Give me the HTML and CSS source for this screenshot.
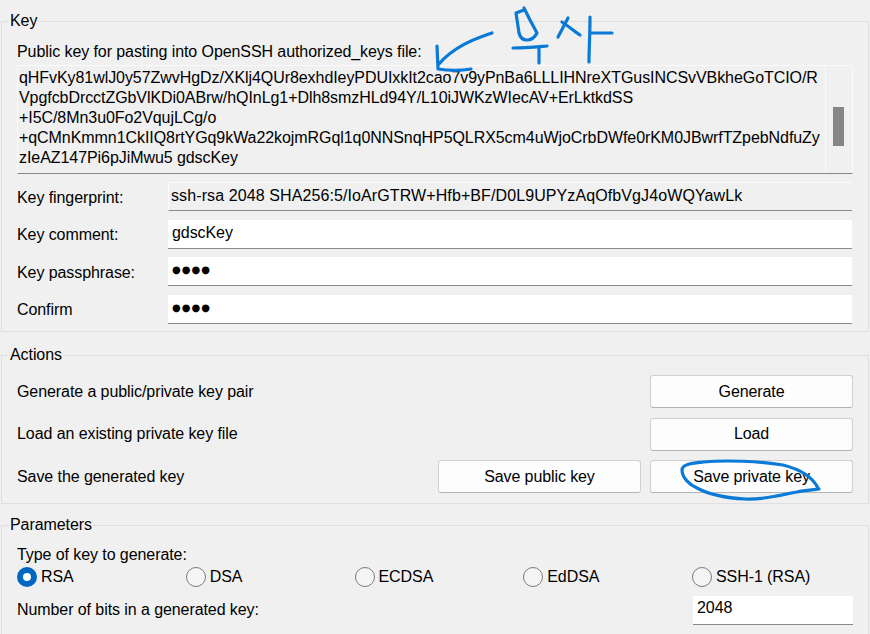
FILE: index.html
```html
<!DOCTYPE html>
<html lang="en">
<head>
<meta charset="utf-8">
<title>PuTTY Key Generator</title>
<link rel="stylesheet" href="styles.css">
</head>
<body>
<main class="window">
  <fieldset class="group group-key">
    <legend>Key</legend>
    <div class="key-label">Public key for pasting into OpenSSH authorized_keys file:</div>
    <div class="keybox">
      <div class="keytext">qHFvKy81wlJ0y57ZwvHgDz/XKlj4QUr8exhdIeyPDUIxkIt2cao7v9yPnBa6LLLIHNreXTGusINCSvVBkheGoTCIO/R<br>VpgfcbDrcctZGbVlKDi0ABrw/hQInLg1+Dlh8smzHLd94Y/L10iJWKzWIecAV+ErLktkdSS<br>+I5C/8Mn3u0Fo2VqujLCg/o<br>+qCMnKmmn1CkIIQ8rtYGq9kWa22kojmRGql1q0NNSnqHP5QLRX5cm4uWjoCrbDWfe0rKM0JBwrfTZpebNdfuZy<br>zIeAZ147Pi6pJiMwu5 gdscKey</div>
      <div class="scrolltrack"><div class="scrollthumb"></div></div>
    </div>
    <div class="form-rows">
      <div class="form-row">
        <span class="row-label">Key fingerprint:</span>
        <div class="field field-readonly">ssh-rsa 2048 SHA256:5/IoArGTRW+Hfb+BF/D0L9UPYzAqOfbVgJ4oWQYawLk</div>
      </div>
      <div class="form-row">
        <span class="row-label">Key comment:</span>
        <div class="field">gdscKey</div>
      </div>
      <div class="form-row">
        <span class="row-label">Key passphrase:</span>
        <div class="field field-secret">●●●●</div>
      </div>
      <div class="form-row">
        <span class="row-label">Confirm</span>
        <div class="field field-secret">●●●●</div>
      </div>
    </div>
  </fieldset>

  <fieldset class="group group-actions">
    <legend>Actions</legend>
    <div class="action-row">
      <span class="action-label">Generate a public/private key pair</span>
      <button class="btn" type="button">Generate</button>
    </div>
    <div class="action-row">
      <span class="action-label">Load an existing private key file</span>
      <button class="btn" type="button">Load</button>
    </div>
    <div class="action-row">
      <span class="action-label">Save the generated key</span>
      <button class="btn" type="button">Save public key</button>
      <button class="btn" type="button">Save private key</button>
    </div>
  </fieldset>

  <fieldset class="group group-params">
    <legend>Parameters</legend>
    <div class="type-label">Type of key to generate:</div>
    <div class="radios">
      <label class="radio"><input type="radio" name="keytype" checked>RSA</label>
      <label class="radio"><input type="radio" name="keytype">DSA</label>
      <label class="radio"><input type="radio" name="keytype">ECDSA</label>
      <label class="radio"><input type="radio" name="keytype">EdDSA</label>
      <label class="radio"><input type="radio" name="keytype">SSH-1 (RSA)</label>
    </div>
    <div class="bits-row">
      <span>Number of bits in a generated key:</span>
      <div class="field field-bits">2048</div>
    </div>
  </fieldset>
</main>
<svg class="ink" width="870" height="634" viewBox="0 0 870 634" aria-hidden="true">
  <path d="M492 33C478 38 455 45 438 65M437 46L438 69C450 71 460 71 471 69"/>
  <path d="M524 8L530 20L537 33C535 37 531 40 527 40C523 40 520 37 519 33L516 13L524 10M513 48C525 48 535 47 547 46M539 47L539 63"/>
  <path d="M568 18L558 37M562 22C568 26 574 31 580 35M590 17C590 35 589 50 589 62M590 33L612 33"/>
  <path d="M818 488C813 478 803 470 783 465C760 461 725 460 703 462C693 463 682 464 682 470C682 478 690 485 697 488C710 495 725 498 745 499C765 500 785 494 797 492C805 490 812 490 819 489"/>
</svg>
</body>
</html>
```

FILE: styles.css
```css
* { box-sizing: border-box; }

html, body {
  margin: 0;
  width: 870px;
  height: 634px;
  overflow: hidden;
  background: #f0f0f0;
}

body {
  position: relative;
  font-family: "Liberation Sans", Arial, sans-serif;
  font-size: 16px;
  letter-spacing: -0.08px;
  color: #000;
}

.window {
  display: flex;
  flex-direction: column;
  padding-left: 1px;
  padding-top: 11px;
}

.group {
  margin: 0;
  min-width: 0;
  width: 868px;
  border: 1px solid #dfdfdf;
  padding: 0 15px;
}

.group legend {
  margin-left: -8px;
  padding: 0 1px;
  line-height: 20px;
}

.group-key { height: 321px; }

.group-actions {
  margin-top: 13px;
  height: 159px;
}

.group-params {
  margin-top: 11px;
  height: 130px;
}

.key-label {
  line-height: 20px;
  margin-top: 11px;
  white-space: nowrap;
}

.keybox {
  display: flex;
  margin-top: 3px;
  width: 836px;
  height: 109px;
  background: #f0f0f0;
  border: 1px solid #fafafa;
  border-bottom-color: #868686;
}

.keytext {
  flex: 1;
  padding: 2px 0 0 1px;
  line-height: 20px;
  letter-spacing: -0.065px;
  white-space: nowrap;
  overflow: hidden;
}

.scrolltrack {
  flex: none;
  width: 27px;
  border-left: 1px solid #fafafa;
  padding: 41px 0 0 7px;
}

.scrollthumb {
  width: 11px;
  height: 39px;
  background: #868686;
}

.form-rows {
  display: flex;
  flex-direction: column;
  gap: 9.5px;
  margin-top: 8.5px;
}

.form-row {
  display: flex;
  align-items: center;
  height: 28px;
}

.row-label {
  flex: none;
  width: 151px;
  line-height: 20px;
  padding-top: 2px;
}

.field {
  flex: none;
  width: 684px;
  height: 29px;
  padding: 0 0 0 4px;
  line-height: 25px;
  background: #fff;
  border-bottom: 1px solid #8a8a8a;
  white-space: nowrap;
}

.field-readonly {
  padding-left: 2px;
  letter-spacing: 0.1px;
  background: #f0f0f0;
  border-top: 1px solid #fafafa;
  border-left: 1px solid #fafafa;
}

.field-secret {
  font-family: "DejaVu Sans", sans-serif;
  font-size: 10px;
  letter-spacing: 1px;
}

.action-row {
  display: flex;
  align-items: center;
  gap: 9px;
  height: 33px;
  margin-top: 9.5px;
}

.action-row:first-of-type { margin-top: 10px; }

.action-label {
  margin-right: auto;
  line-height: 20px;
}

.btn {
  flex: none;
  width: 203px;
  height: 33px;
  padding: 0;
  font: inherit;
  letter-spacing: -0.1px;
  color: #000;
  background: #fdfdfd;
  border: 1px solid #d0d0d0;
  border-bottom-color: #b5b5b5;
  border-radius: 3px;
}

.type-label {
  line-height: 20px;
  margin-top: 10px;
}

.radios {
  display: grid;
  grid-template-columns: repeat(5, 168.75px);
  margin-top: 2px;
  height: 20px;
}

.radio {
  display: flex;
  align-items: center;
  gap: 4px;
  line-height: 20px;
}

.radio input {
  appearance: none;
  flex: none;
  margin: 0;
  width: 20px;
  height: 20px;
  border: 1px solid #7a7a7a;
  border-radius: 50%;
  background: #f5f5f5;
}

.radio input:checked {
  border: 6px solid #0067c0;
  background: #fff;
}

.bits-row {
  display: flex;
  justify-content: space-between;
  align-items: center;
  margin-top: 9px;
  height: 28px;
  width: 836px;
}

.field-bits {
  width: 160px;
  height: 29px;
  line-height: 23px;
}

.ink {
  position: absolute;
  left: 0;
  top: 0;
  pointer-events: none;
}

.ink path {
  fill: none;
  stroke: #0a7ad6;
  stroke-width: 3.2;
  stroke-linecap: round;
  stroke-linejoin: round;
}
```
